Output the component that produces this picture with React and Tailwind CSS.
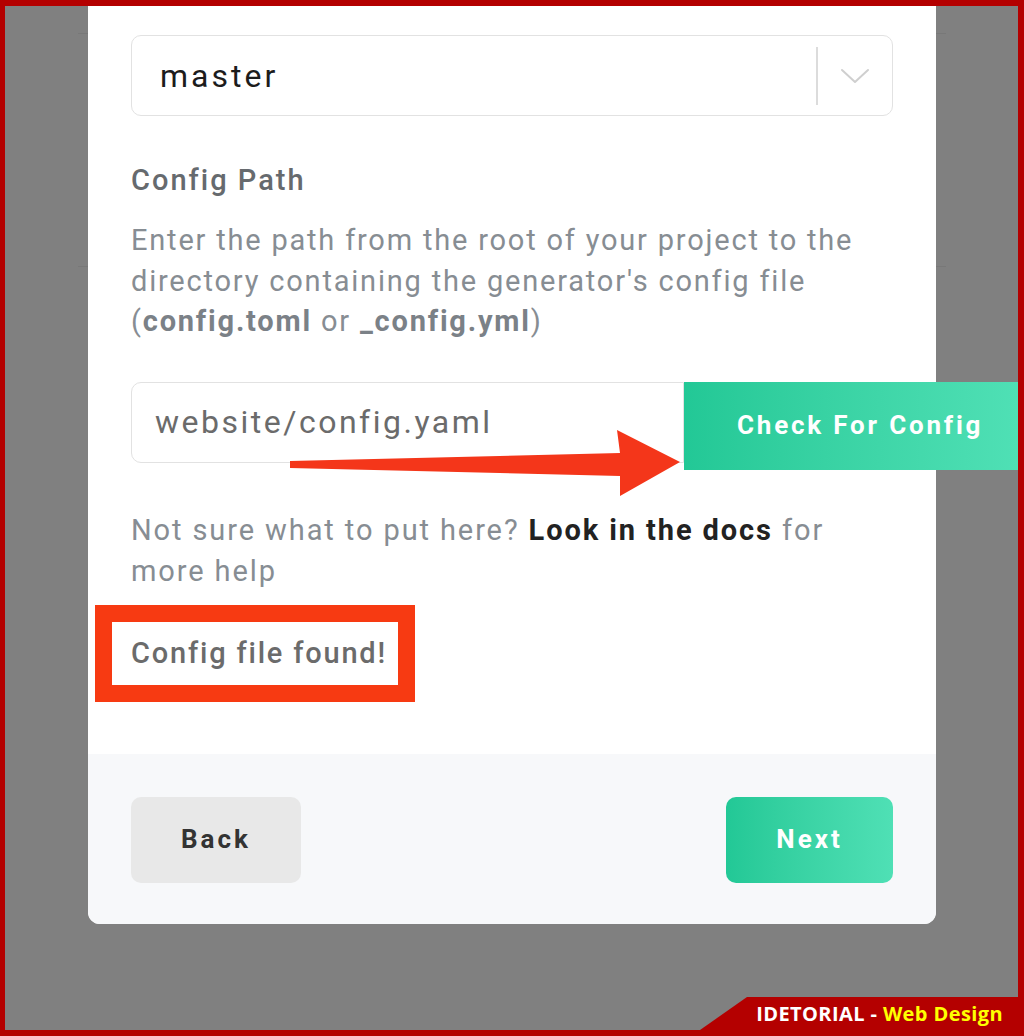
import React from "react";

function Chevron() {
  return (
    <svg width="30" height="16" viewBox="0 0 30 16" fill="none">
      <path d="M2 2 L15 14 L28 2" stroke="#cfcfcf" strokeWidth="2" strokeLinecap="round" strokeLinejoin="round" />
    </svg>
  );
}

export default function App() {
  const font = { fontFamily: "Roboto, 'Noto Sans', Arial, sans-serif" };
  return (
    <div
      className="relative w-[1024px] h-[1036px] overflow-hidden bg-[#808080] border-t-[6px] border-l-[5px] border-r-[6px] border-b-[6px] border-[#b40000]"
      style={font}
    >
      {/* background page remnants */}
      <div className="absolute left-[73px] top-[27px] w-[868px] h-px bg-[#787878]" />
      <div className="absolute left-[73px] top-[260px] w-[868px] h-px bg-[#787878]" />

      {/* modal */}
      <div className="relative ml-[83px] w-[848px] bg-white rounded-b-[12px]">
        <div className="px-[43px] pt-[29px] pb-[81px]">
          {/* select */}
          <div className="h-[81px] rounded-[10px] border border-[#e2e2e2] flex items-center">
            <div className="flex-1 pl-[28px] text-[32px] tracking-[3px] text-[#1c1c1c] leading-none">master</div>
            <div className="w-[2px] h-[58px] bg-[#dcdcdc]" />
            <div className="w-[74px] flex items-center justify-center">
              <Chevron />
            </div>
          </div>

          <div className="mt-[44px] text-[29px] tracking-[2px] leading-[40px] font-medium text-[#666a6e]">Config Path</div>
          <p className="mt-[20px] text-[29px] tracking-[1.8px] leading-[40.5px] text-[#878d93]">
            Enter the path from the root of your project to the directory containing the generator's config file (
            <b className="font-bold text-[#7b8187]">config.toml</b> or{" "}
            <b className="font-bold text-[#7b8187]">_config.yml</b>)
          </p>

          {/* input row */}
          <div className="mt-[40px] flex items-start">
            <div className="shrink-0 w-[553px] h-[81px] rounded-l-[10px] border border-[#e2e2e2] flex items-center pl-[23px] text-[32px] tracking-[2.5px] text-[#6b6b6b]">
              website/config.yaml
            </div>
            <div className="shrink-0 w-[334px] h-[88px] flex items-center pl-[53px] text-[26px] font-bold tracking-[2.8px] text-white bg-gradient-to-r from-[#22c896] to-[#4fe0b5]">
              Check For Config
            </div>
          </div>

          <p className="mt-[40px] text-[29px] tracking-[1.9px] leading-[41px] text-[#878d93]">
            Not sure what to put here? <b className="font-bold text-[#222]">Look in the docs</b> for more help
          </p>

          <div className="mt-[41px] relative">
            <span className="text-[29px] tracking-[1.8px] leading-[40px] font-medium text-[#6b6b6b]">Config file found!</span>
            <div className="absolute left-[-36px] top-[-28px] w-[320px] h-[97px] border-[17px] border-[#f73a12]" />
          </div>
        </div>

        {/* footer */}
        <div className="bg-[#f7f8fa] rounded-b-[12px] px-[43px] pt-[43px] pb-[41px] flex justify-between">
          <button className="w-[170px] h-[86px] rounded-[10px] bg-[#e8e8e8] text-[26px] font-bold tracking-[3px] text-[#333]">
            Back
          </button>
          <button className="w-[167px] h-[86px] rounded-[10px] bg-gradient-to-r from-[#22c896] to-[#4fe0b5] text-[26px] font-bold tracking-[3px] text-white">
            Next
          </button>
        </div>
      </div>

      {/* red arrow annotation */}
      <svg className="absolute left-[-5px] top-[-6px]" width="1024" height="1036" viewBox="0 0 1024 1036">
        <polygon
          points="290,461 620,453 617,430 680,462 620,496 620,476 290,468"
          fill="#f4361a"
        />
      </svg>

      {/* watermark */}
      <div className="absolute right-0 bottom-0 w-[318px] h-[33px] bg-[#b40000] [clip-path:polygon(0_100%,47px_0,100%_0,100%_100%)] flex items-center justify-end pr-[15px]">
        <span
          className="text-[20px] font-bold leading-none text-white tracking-[0.4px]"
          style={{ fontFamily: "'Open Sans', 'DejaVu Sans', sans-serif" }}
        >
          IDETORIAL - <span className="text-[#ffff00]">Web Design</span>
        </span>
      </div>
    </div>
  );
}
